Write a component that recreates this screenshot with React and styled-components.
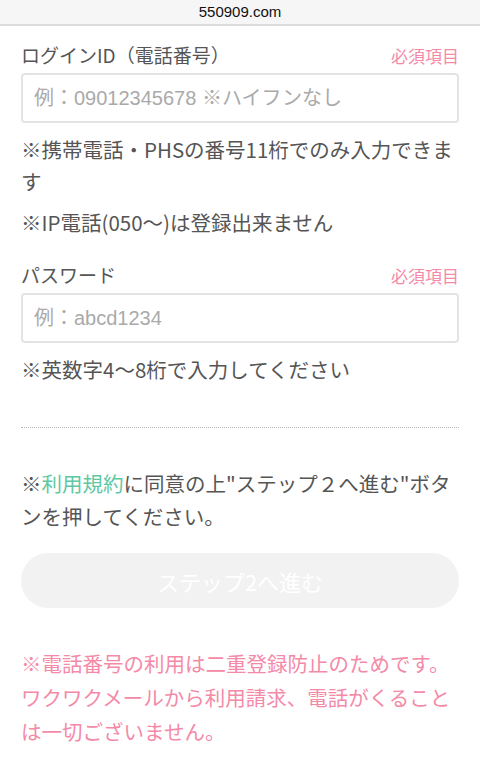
import React from "react";
import styled, { createGlobalStyle } from "styled-components";

const GlobalStyle = createGlobalStyle`
  html, body { margin: 0; padding: 0; background: #fff; }
  body {
    font-family: "Noto Sans CJK JP", "Noto Sans", sans-serif;
    -webkit-font-smoothing: antialiased;
  }
  * { box-sizing: border-box; }
`;

const Page = styled.div`
  width: 480px;
  min-height: 769px;
  background: #fff;
`;

const AddressBar = styled.header`
  height: 26px;
  background: #f6f6f6;
  border-bottom: 2px solid #dcdcdc;
  display: flex;
  align-items: center;
  justify-content: center;
  font-family: "Liberation Sans", Arial, sans-serif;
  font-size: 15px;
  color: #111;
  padding-bottom: 1px;
`;

const Main = styled.main`
  padding: 14px 21px 30px;
  display: flex;
  flex-direction: column;
`;

const Field = styled.section`
  display: flex;
  flex-direction: column;
  margin-top: ${(p) => p.$gap || 0}px;
`;

const LabelRow = styled.div`
  display: flex;
  justify-content: space-between;
  align-items: baseline;
  line-height: 30px;
  margin-bottom: 2px;
`;

const Label = styled.label`
  font-size: 19px;
  color: #555;
`;

const Required = styled.span`
  font-size: 17px;
  color: #f48aa8;
`;

const Input = styled.input`
  width: 100%;
  height: 50px;
  border: 2px solid #e4e4e4;
  border-radius: 4px;
  padding: 0 11px;
  font-family: "Liberation Sans", "Noto Sans CJK JP", sans-serif;
  font-size: 20px;
  color: #333;
  background: #fff;
  outline: none;
  &::placeholder { color: #aaa; }
`;

const Note = styled.p`
  margin: ${(p) => p.$top || 0}px 0 0;
  font-size: 20.5px;
  line-height: 32px;
  color: #555;
`;

const Divider = styled.hr`
  margin: 42px 0 0;
  border: 0;
  border-top: 1px dotted #b8b8b8;
  height: 0;
`;

const Terms = styled.p`
  margin: 39px 0 0;
  font-size: 20.5px;
  line-height: 33px;
  color: #555;
`;

const Link = styled.a`
  color: #5ec8a2;
  text-decoration: none;
`;

const StepButton = styled.button`
  margin-top: 20px;
  height: 55px;
  width: 100%;
  border: 0;
  border-radius: 28px;
  background: #f2f2f2;
  color: #fff;
  font-family: "Noto Sans CJK JP", sans-serif;
  font-size: 22px;
  cursor: not-allowed;
`;

const Warning = styled.p`
  margin: 38px 0 0;
  font-size: 20.5px;
  line-height: 34px;
  color: #f48aa8;
`;

export default function App() {
  return (
    <Page>
      <GlobalStyle />
      <AddressBar>550909.com</AddressBar>
      <Main>
        <Field>
          <LabelRow>
            <Label>ログインID（電話番号）</Label>
            <Required>必須項目</Required>
          </LabelRow>
          <Input type="tel" placeholder="例：09012345678 ※ハイフンなし" />
          <Note $top={10}>※携帯電話・PHSの番号11桁でのみ入力できます</Note>
          <Note $top={9}>※IP電話(050〜)は登録出来ません</Note>
        </Field>
        <Field $gap={22}>
          <LabelRow>
            <Label>パスワード</Label>
            <Required>必須項目</Required>
          </LabelRow>
          <Input type="password" placeholder="例：abcd1234" />
          <Note $top={10}>※英数字4〜8桁で入力してください</Note>
        </Field>
        <Divider />
        <Terms>
          ※<Link href="#">利用規約</Link>に同意の上"ステップ２へ進む"ボタンを押してください。
        </Terms>
        <StepButton disabled>ステップ2へ進む</StepButton>
        <Warning>
          ※電話番号の利用は二重登録防止のためです。ワクワクメールから利用請求、電話がくることは一切ございません。
        </Warning>
      </Main>
    </Page>
  );
}
